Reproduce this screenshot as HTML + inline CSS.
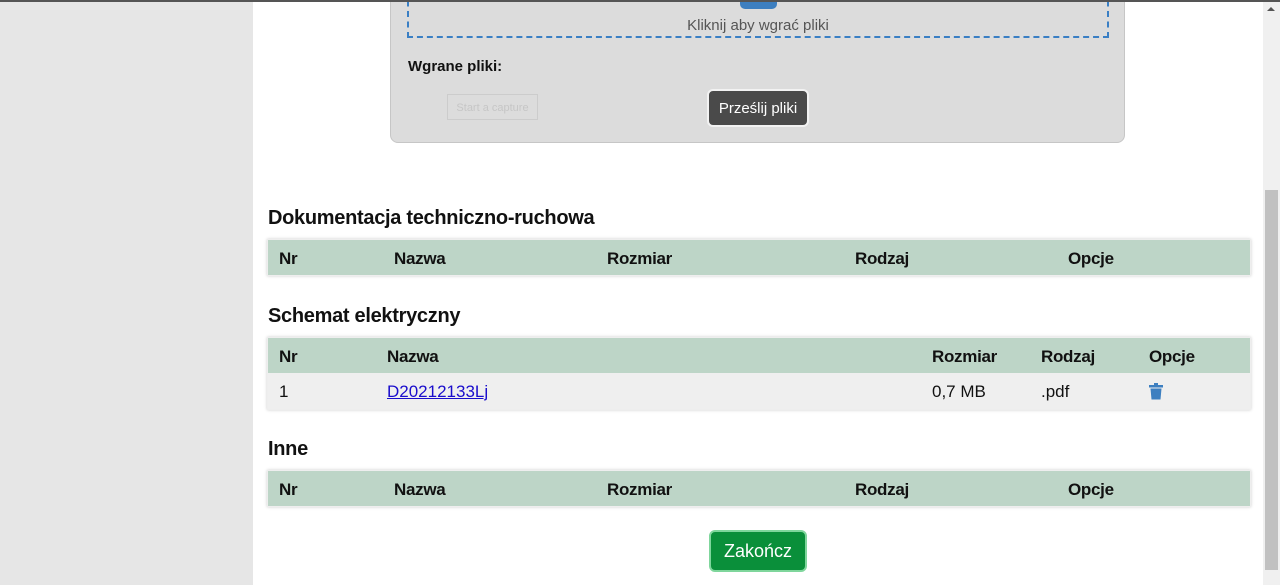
<!DOCTYPE html>
<html><head><meta charset="utf-8"><style>
body{margin:0;width:1280px;height:585px;overflow:hidden;position:relative;background:#fff;font-family:"Liberation Sans",sans-serif;}
.a{position:absolute;}
.topline{left:0;top:0;width:1280px;height:2px;background:#555;}
.left{left:0;top:0;width:253px;height:585px;background:#e6e6e6;}
.sb{left:1263px;top:2px;width:17px;height:583px;background:#f0f0f0;}
.thumb{left:1265px;top:190px;width:13px;height:380px;background:#c1c1c1;}
.panel{left:390px;top:-20px;width:733px;height:161px;background:#dcdcdc;border:1px solid #c6c6c6;border-radius:8px;}
.dash{left:407px;top:-10px;width:698px;height:44px;border:2px dashed #3a7fc4;}
h3{position:absolute;margin:0;font-size:20px;font-weight:bold;color:#111;left:268px;letter-spacing:-0.3px}
.tbl{position:absolute;left:267px;width:982px;box-shadow:0 0 3px #ccc;border:1px solid #eee;}
.hd{height:35px;background:#bdd5c7;position:relative;}
.row{height:36px;background:#efefef;position:relative;}
.c{position:absolute;top:1px;line-height:36px;font-size:17px;color:#111;}
.hd .c{font-weight:bold;letter-spacing:-0.3px;line-height:35px}
</style></head><body>
<div class="a left"></div>
<div class="a panel"></div>
<div class="a dash"></div>
<div class="a" style="left:740px;top:0;width:37px;height:9px;background:#3d7fc0;border-radius:0 0 5px 5px"></div>
<div class="a" style="left:407px;width:702px;top:17px;text-align:center;font-size:15px;color:#555">Kliknij aby wgrać pliki</div>
<div class="a" style="left:408px;top:58px;font-size:15px;font-weight:bold;color:#111">Wgrane pliki:</div>
<div class="a" style="left:447px;top:94px;width:89px;height:24px;border:1px solid #ccc;font-size:11px;color:#c6c6c6;line-height:26px;text-align:center">Start a capture</div>
<div class="a" style="left:707px;top:89px;width:98px;height:34px;background:#4a4a4a;border:2px solid #f2f2f2;border-radius:6px;color:#fff;font-size:15px;line-height:36px;text-align:center">Prześlij pliki</div>

<h3 style="top:207px">Dokumentacja techniczno-ruchowa</h3>
<div class="tbl" style="top:239px"><div class="hd">
<span class="c" style="left:11px">Nr</span><span class="c" style="left:126px">Nazwa</span><span class="c" style="left:339px">Rozmiar</span><span class="c" style="left:587px">Rodzaj</span><span class="c" style="left:800px">Opcje</span></div></div>

<h3 style="top:305px">Schemat elektryczny</h3>
<div class="tbl" style="top:337px"><div class="hd">
<span class="c" style="left:11px">Nr</span><span class="c" style="left:119px">Nazwa</span><span class="c" style="left:664px">Rozmiar</span><span class="c" style="left:773px">Rodzaj</span><span class="c" style="left:881px">Opcje</span></div>
<div class="row"><span class="c" style="left:11px">1</span><span class="c" style="left:119px;color:#1a0dcc;text-decoration:underline">D20212133Lj</span><span class="c" style="left:664px">0,7 MB</span><span class="c" style="left:773px">.pdf</span>
<svg class="a" style="left:881px;top:10px" width="14" height="17" viewBox="0 0 14 17"><rect x="0" y="2" width="14" height="2.5" fill="#3d7fc0"/><rect x="5" y="0" width="4" height="2" fill="#3d7fc0"/><path d="M1.5 5.5h11l-1 11h-9z" fill="#3d7fc0"/></svg></div></div>

<h3 style="top:438px">Inne</h3>
<div class="tbl" style="top:470px"><div class="hd">
<span class="c" style="left:11px">Nr</span><span class="c" style="left:126px">Nazwa</span><span class="c" style="left:339px">Rozmiar</span><span class="c" style="left:587px">Rodzaj</span><span class="c" style="left:800px">Opcje</span></div></div>

<div class="a" style="left:709px;top:530px;width:94px;height:38px;background:#0a8f3a;border:2px solid #7fd69c;border-radius:6px;color:#fff;font-size:18px;line-height:39px;text-align:center">Zakończ</div>

<div class="a sb"></div>
<div class="a thumb"></div>
<div class="a" style="left:1267px;top:7px;width:0;height:0;border-left:4px solid transparent;border-right:4px solid transparent;border-bottom:4px solid #555"></div>
<div class="a topline"></div>
</body></html>
